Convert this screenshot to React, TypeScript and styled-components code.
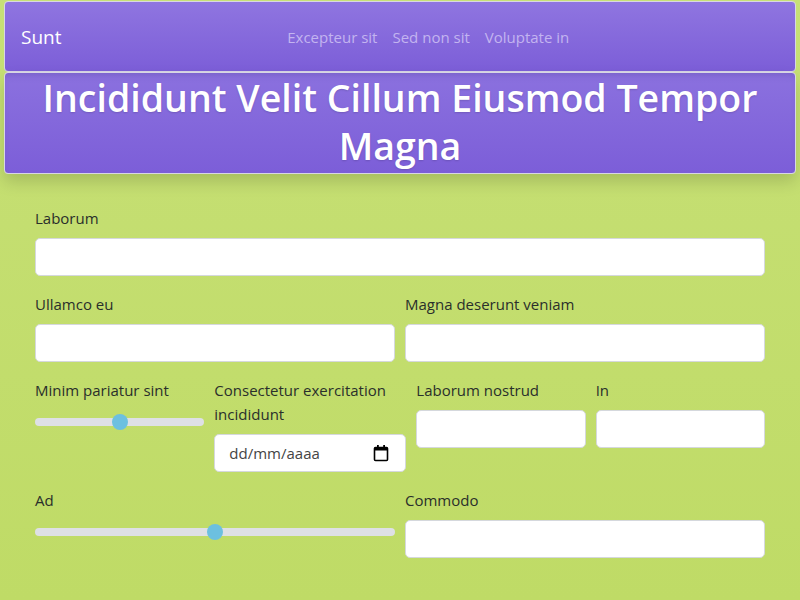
import React, { useState } from 'react';
import styled, { createGlobalStyle } from 'styled-components';

// ─── Global ───────────────────────────────────────────────────────────────────

const GlobalStyle = createGlobalStyle`
  html, body {
    margin: 0;
    padding: 0;
  }
  body {
    min-height: 600px;
    background: linear-gradient(180deg, #c7e076 0%, #bfdb66 100%);
    font-family: "Open Sans", "Noto Sans", sans-serif;
    color: #212529;
  }
  * { box-sizing: border-box; }
`;

// ─── Styled ───────────────────────────────────────────────────────────────────

const Page = styled.div`
  padding: 1px 4px 0;
`;

const Navbar = styled.nav`
  height: 71px;
  display: flex;
  align-items: center;
  padding: 0 16px;
  background: linear-gradient(180deg, #8f75e0 0%, #7c5ed8 100%);
  border: 1px solid #d8d6e4;
  border-radius: 4px;
`;

const Brand = styled.span`
  font-size: 19px;
  color: #fff;
  margin-right: 16px;
`;

const NavLinks = styled.div`
  flex: 1;
  display: flex;
  justify-content: center;
`;

const NavLink = styled.a`
  font-size: 15px;
  color: #c3b4f0;
  padding: 0 7.5px;
  text-decoration: none;
`;

const Header = styled.header`
  padding: 1px 0 3px;
  background: linear-gradient(180deg, #8b71df 0%, #7c5ed8 100%);
  border: 1px solid #d8d6e4;
  border-radius: 4px;
  box-shadow: 0 8px 16px rgba(0, 0, 0, 0.15), inset 0 6px 8px -6px rgba(60, 40, 120, 0.35);
`;

const Title = styled.h1`
  margin: 0;
  font-size: 37.5px;
  line-height: 48px;
  font-weight: 600;
  color: #fff;
  text-align: center;
  text-shadow: 0 1px 2px rgba(0, 0, 0, 0.15);
`;

const Form = styled.form`
  padding: 32px 35px 0;
`;

const Row = styled.div<{ cols: string }>`
  display: grid;
  grid-template-columns: ${({ cols }) => cols};
  column-gap: 10px;
  margin-bottom: 16px;
`;

const Field = styled.div`
  min-width: 0;
`;

const Label = styled.label`
  display: block;
  font-size: 15px;
  line-height: 24px;
  margin-bottom: 8px;
  color: #2a2f2b;
`;

const Input = styled.input`
  display: block;
  width: 100%;
  height: 38px;
  padding: 6px 12px;
  border: 1px solid #d5d8dd;
  border-radius: 5px;
  background: #fff;
  font: inherit;
  outline: none;
`;

const DateBox = styled.div`
  height: 38px;
  display: flex;
  align-items: center;
  justify-content: space-between;
  padding: 0 16px 0 14px;
  border: 1px solid #d5d8dd;
  border-radius: 5px;
  background: #fff;
  font-size: 15px;
  color: #444;
`;

const Range = styled.input`
  -webkit-appearance: none;
  appearance: none;
  display: block;
  width: 100%;
  height: 24px;
  margin: 0;
  background: transparent;
  &::-webkit-slider-runnable-track {
    height: 8px;
    border-radius: 4px;
    background: #dee0e5;
  }
  &::-webkit-slider-thumb {
    -webkit-appearance: none;
    width: 16px;
    height: 16px;
    margin-top: -4px;
    border: none;
    border-radius: 50%;
    background: #6cc0e0;
  }
`;

// ─── Parts ────────────────────────────────────────────────────────────────────

const CalendarIcon = () => (
  <svg width="16" height="18" viewBox="0 0 16 18">
    <rect x="1.5" y="3.5" width="13" height="13" rx="1" fill="none" stroke="#000" strokeWidth="1.6" />
    <rect x="1.5" y="3.5" width="13" height="3" fill="#000" />
    <rect x="4" y="1" width="1.8" height="3" fill="#000" />
    <rect x="10.2" y="1" width="1.8" height="3" fill="#000" />
  </svg>
);

const Slider: React.FC = () => {
  const [v, setV] = useState(50);
  return <Range type="range" min={0} max={100} value={v} onChange={e => setV(+e.target.value)} />;
};

// ─── App ──────────────────────────────────────────────────────────────────────

export default function App() {
  return (
    <>
      <GlobalStyle />
      <Page>
        <Navbar>
          <Brand>Sunt</Brand>
          <NavLinks>
            <NavLink href="#">Excepteur sit</NavLink>
            <NavLink href="#">Sed non sit</NavLink>
            <NavLink href="#">Voluptate in</NavLink>
          </NavLinks>
        </Navbar>
        <Header>
          <Title>Incididunt Velit Cillum Eiusmod Tempor Magna</Title>
        </Header>
      </Page>
      <Form>
        <Row cols="1fr">
          <Field>
            <Label>Laborum</Label>
            <Input type="text" />
          </Field>
        </Row>
        <Row cols="1fr 1fr">
          <Field>
            <Label>Ullamco eu</Label>
            <Input type="text" />
          </Field>
          <Field>
            <Label>Magna deserunt veniam</Label>
            <Input type="text" />
          </Field>
        </Row>
        <Row cols="1fr 192px 1fr 1fr">
          <Field>
            <Label>Minim pariatur sint</Label>
            <Slider />
          </Field>
          <Field>
            <Label>Consectetur exercitation incididunt</Label>
            <DateBox>
              <span>dd/mm/aaaa</span>
              <CalendarIcon />
            </DateBox>
          </Field>
          <Field>
            <Label>Laborum nostrud</Label>
            <Input type="text" />
          </Field>
          <Field>
            <Label>In</Label>
            <Input type="text" />
          </Field>
        </Row>
        <Row cols="1fr 1fr">
          <Field>
            <Label>Ad</Label>
            <Slider />
          </Field>
          <Field>
            <Label>Commodo</Label>
            <Input type="text" />
          </Field>
        </Row>
      </Form>
    </>
  );
}
